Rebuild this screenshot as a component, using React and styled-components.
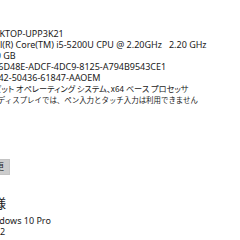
import React from "react";
import styled, { createGlobalStyle } from "styled-components";

const GlobalStyle = createGlobalStyle`
  html, body {
    margin: 0;
    padding: 0;
    background: #ffffff;
    overflow: hidden;
  }
  body {
    font-family: "Noto Sans", "Noto Sans CJK JP", sans-serif;
    color: #1a1a1a;
  }
`;

const Page = styled.div`
  width: 400px;
  margin-left: -150px;
  padding-top: 28px;
  display: flex;
  flex-direction: column;
`;

const SpecTable = styled.div`
  display: grid;
  grid-template-columns: 133px auto;
  grid-auto-rows: 11px;
  margin-top: ${(p) => p.$top || 0}px;
  font-size: 9px;
  line-height: 11px;
  white-space: pre;
`;

const Label = styled.div`
  color: #1a1a1a;
`;

const jpSize = { kana: 8.2, kanji: 7.45 };

const Value = styled.div`
  color: #1a1a1a;
  font-family: ${(p) =>
    p.$jp ? '"Noto Sans CJK JP", sans-serif' : '"Noto Sans", "Noto Sans CJK JP", sans-serif'};
  font-size: ${(p) => (p.$jp ? jpSize[p.$jp] : 9)}px;
  font-feature-settings: ${(p) => (p.$jp === "kana" ? '"palt" 1' : "normal")};
`;

const Button = styled.div`
  margin-top: ${(p) => p.$top}px;
  width: 160px;
  height: 16px;
  box-sizing: border-box;
  background: #cccccc;
  border: 1px solid #c4c4c4;
  font-size: 9px;
  line-height: 14px;
  text-align: right;
  padding-right: 5px;
  white-space: nowrap;
  overflow: hidden;
`;

const Heading = styled.div`
  margin-top: 20px;
  height: 16px;
  font-size: 13px;
  line-height: 16px;
  white-space: nowrap;
  padding-left: 58px;
`;

const device = [
  ["デバイス名", "DESKTOP-UPP3K21"],
  ["プロセッサ", "Intel(R) Core(TM) i5-5200U CPU @ 2.20GHz   2.20 GHz"],
  ["実装 RAM", "8.00 GB"],
  ["デバイス ID", "8E36D48E-ADCF-4DC9-8125-A794B9543CE1"],
  ["プロダクト ID", "00342-50436-61847-AAOEM"],
  ["システムの種類", "64 ビット オペレーティング システム、x64 ベース プロセッサ", "kana"],
  ["ペンとタッチ", "このディスプレイでは、ペン入力とタッチ入力は利用できません", "kanji"],
];

const spec = [
  ["エディション", "Windows 10 Pro"],
  ["バージョン", "22H2"],
];

export default function App() {
  return (
    <>
      <GlobalStyle />
      <Page>
        <SpecTable>
          {device.map(([l, v, jp]) => (
            <React.Fragment key={l}>
              <Label>{l}</Label>
              <Value $jp={jp}>{v}</Value>
            </React.Fragment>
          ))}
        </SpecTable>
        <Button $top={54}>この PC の名前を変更</Button>
        <Heading>Windows の仕様</Heading>
        <SpecTable $top={4}>
          {spec.map(([l, v]) => (
            <React.Fragment key={l}>
              <Label>{l}</Label>
              <Value>{v}</Value>
            </React.Fragment>
          ))}
        </SpecTable>
      </Page>
    </>
  );
}
